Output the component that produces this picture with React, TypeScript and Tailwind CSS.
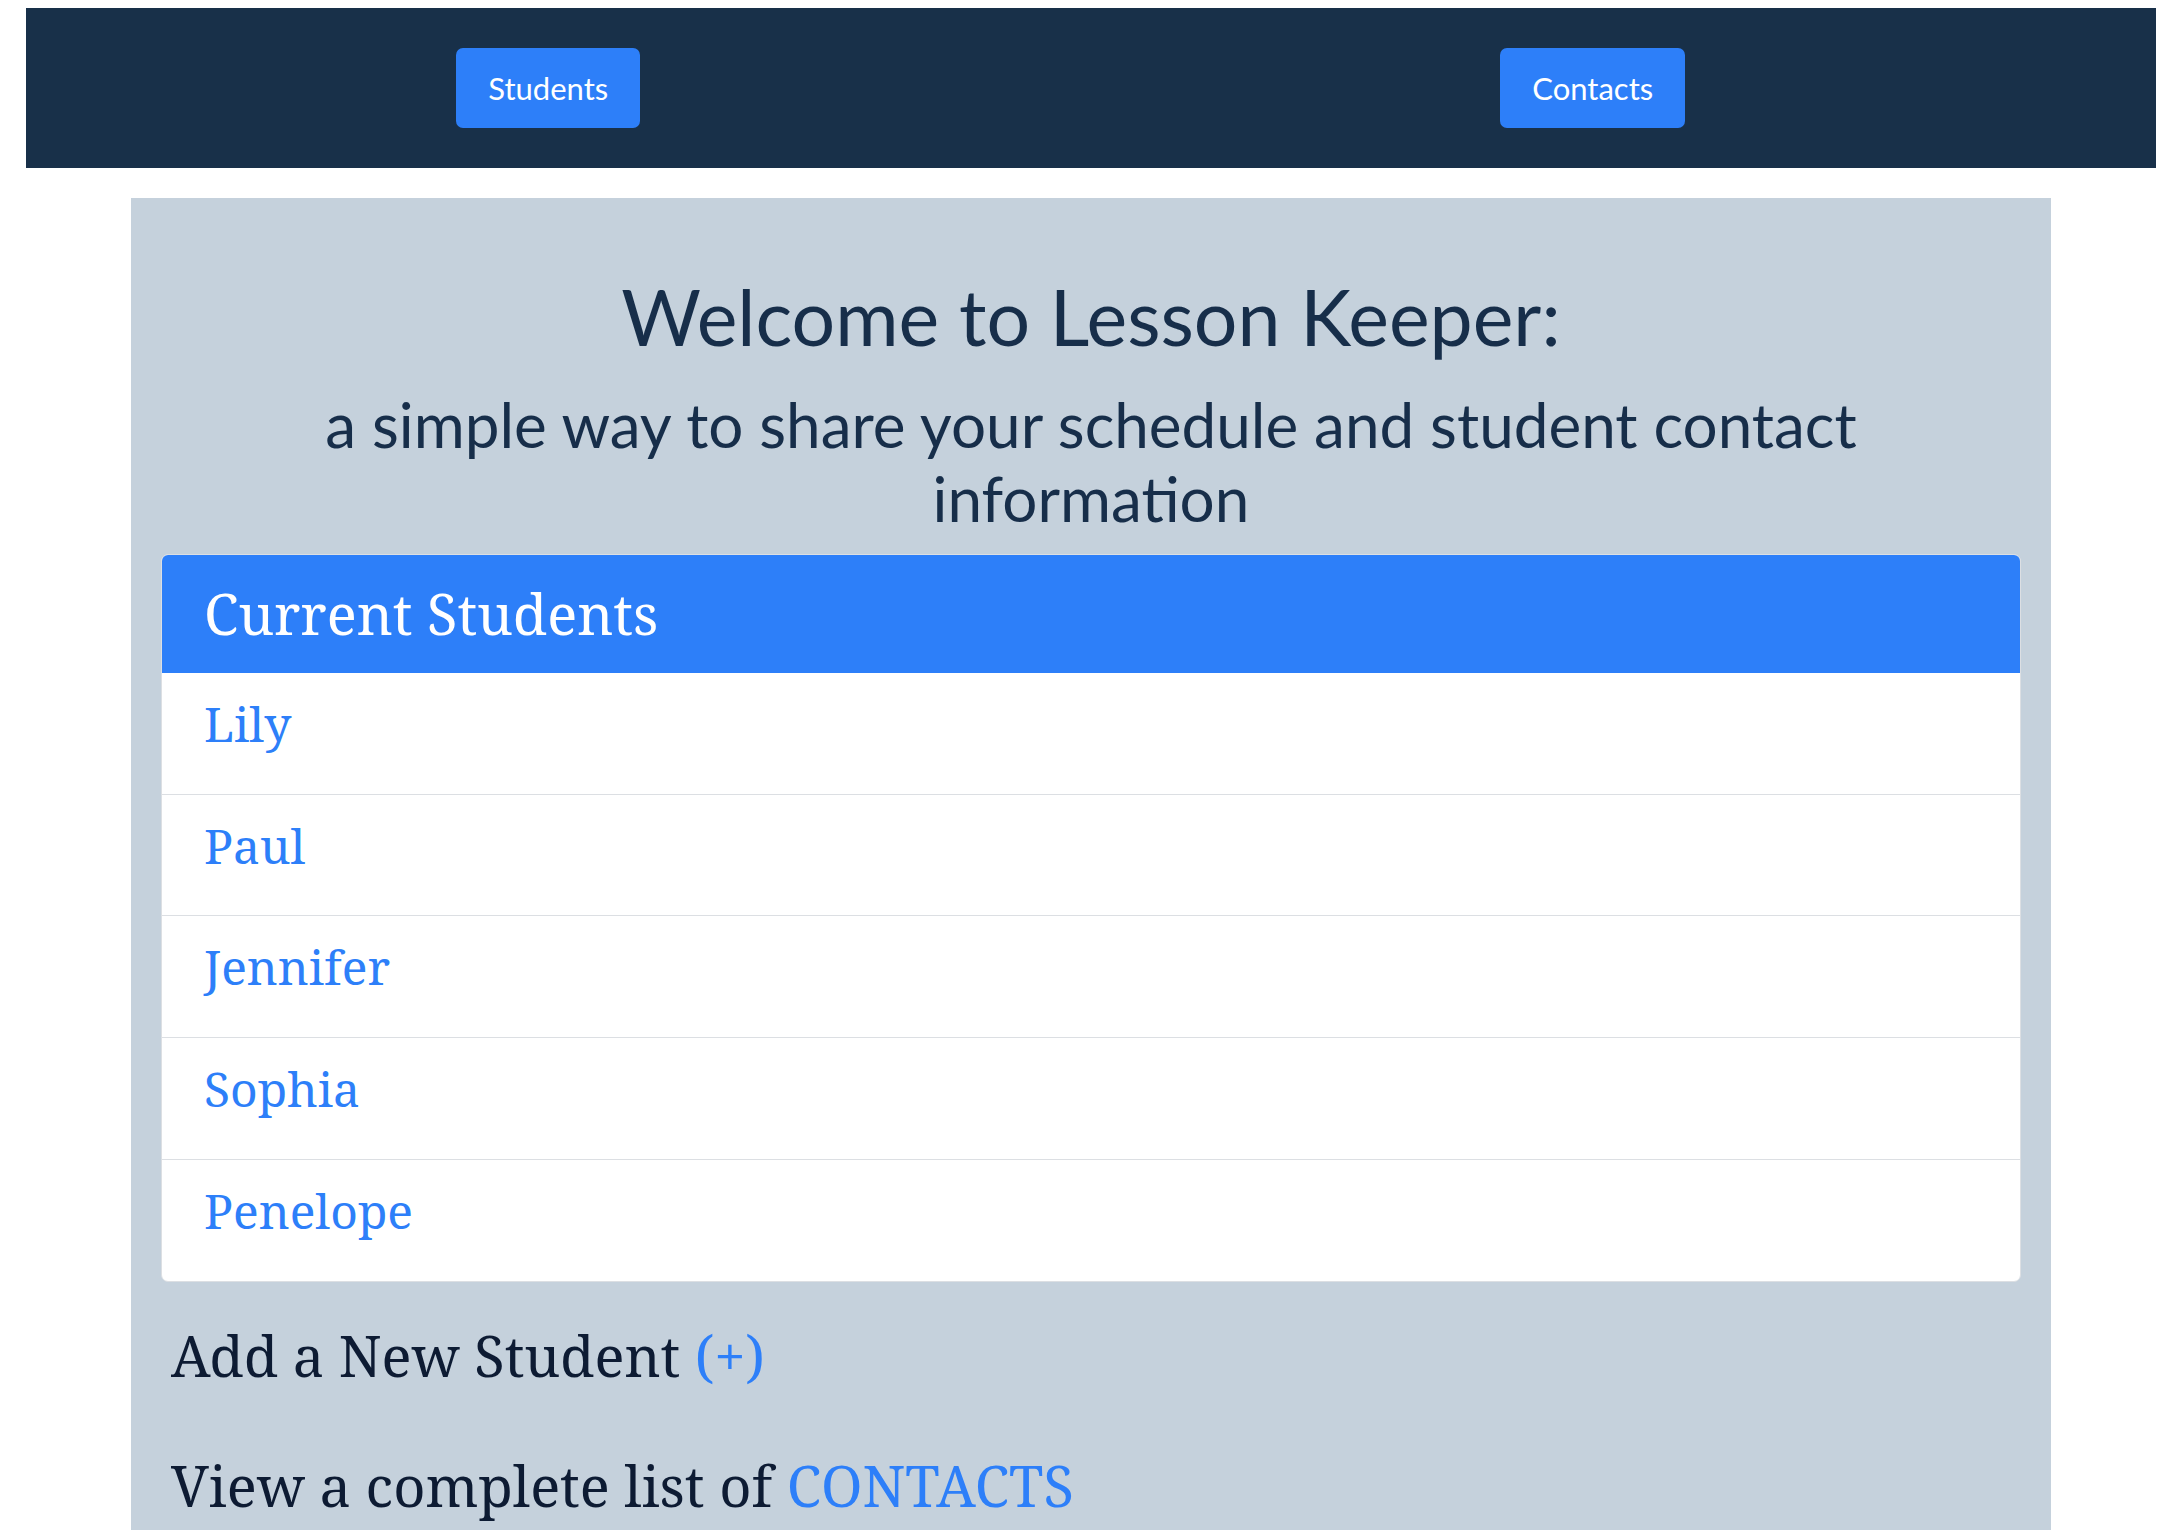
const students = ["Lily", "Paul", "Jennifer", "Sophia", "Penelope"];

const display = "font-['Lato','Open_Sans',sans-serif]";
const serif = "font-['Noto_Serif','DejaVu_Serif',serif]";

function NavButton({ label }: { label: string }) {
  return (
    <div className="flex justify-center">
      <button
        className={`${display} flex h-[80px] items-center rounded-[7px] bg-[#2d7ff9] px-[32px] text-[31px] text-white`}
      >
        {label}
      </button>
    </div>
  );
}

export default function App() {
  return (
    <div className="min-h-screen bg-white pt-[8px]">
      {/* top bar */}
      <nav className="mx-[26px] grid h-[160px] grid-cols-2 items-center bg-[#183049] pr-[41px]">
        <NavButton label="Students" />
        <NavButton label="Contacts" />
      </nav>

      <main className="mx-auto mt-[30px] w-[1920px] bg-[#c5d1dc] px-[30px] pb-[80px]">
        <h1
          className={`${display} pt-[73px] text-center text-[77px] leading-[90px] text-[#172e4a]`}
        >
          Welcome to Lesson Keeper:
        </h1>
        <h2
          className={`${display} mx-auto mt-[26px] max-w-[1660px] text-center text-[62px] leading-[74px] text-[#172e4a]`}
        >
          a simple way to share your schedule and student contact information
        </h2>

        {/* students card */}
        <div className="mt-[19px] overflow-hidden rounded-[7px] border border-[#dcdfe3] bg-white">
          <div
            className={`${serif} bg-[#2d7ff9] px-[42px] pt-[25px] pb-[26px] text-[56px] leading-[1.2] text-white`}
          >
            Current Students
          </div>
          <ul className="divide-y divide-[#dcdfe3]">
            {students.map((name) => (
              <li
                key={name}
                className={`${serif} h-[121.6px] px-[42px] pt-[22px] text-[48px] leading-[1.2] text-[#2d7ff9]`}
              >
                <a href="#">{name}</a>
              </li>
            ))}
          </ul>
        </div>

        <p className={`${serif} mt-[43px] px-[10px] text-[56px] leading-[60px] text-[#0d1b33]`}>
          Add a New Student{" "}
          <a href="#" className="text-[#2d7ff9]">
            (+)
          </a>
        </p>
        <p className={`${serif} mt-[70px] px-[10px] text-[56px] leading-[60px] text-[#0d1b33]`}>
          View a complete list of{" "}
          <a href="#" className="text-[#2d7ff9]">
            CONTACTS
          </a>
        </p>
      </main>
    </div>
  );
}
